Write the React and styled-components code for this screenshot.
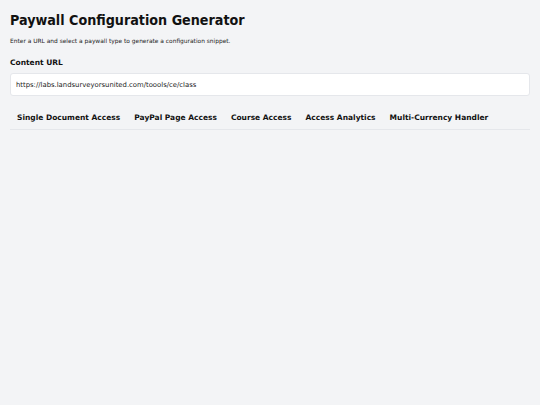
import React, { useState } from 'react';
import styled, { createGlobalStyle } from 'styled-components';

const GlobalStyle = createGlobalStyle`
  html, body {
    margin: 0;
    padding: 0;
    background: #f3f4f6;
    font-family: "DejaVu Sans", Verdana, sans-serif;
    color: #111827;
  }
`;

const Page = styled.div`
  min-height: 405px;
  box-sizing: border-box;
  padding: 10px 10px;
  background: #f3f4f6;
`;

const Title = styled.h1`
  margin: 0;
  font-family: "DejaVu Sans Condensed", "DejaVu Sans", sans-serif;
  font-size: 14.2px;
  line-height: 21px;
  font-weight: bold;
  color: #111;
`;

const Subtitle = styled.p`
  margin: 6px 0 0;
  font-size: 5.9px;
  line-height: 8px;
  color: #222;
`;

const Label = styled.label`
  display: block;
  margin-top: 13px;
  font-size: 7.5px;
  line-height: 10px;
  font-weight: bold;
  color: #111;
`;

const UrlInput = styled.input`
  display: block;
  width: 100%;
  box-sizing: border-box;
  margin-top: 5px;
  height: 23px;
  padding: 0 5px;
  border: 1px solid #e5e7eb;
  border-radius: 3px;
  background: #fff;
  font-family: "DejaVu Sans", Verdana, sans-serif;
  font-size: 6.85px;
  color: #222;
  outline: none;
`;

const TabList = styled.div`
  display: flex;
  margin-top: 12px;
  border-bottom: 1px solid #e5e7eb;
`;

const Tab = styled.button`
  border: none;
  background: transparent;
  padding: 5px 7px 7px;
  font-family: "DejaVu Sans", Verdana, sans-serif;
  font-size: 7.5px;
  font-weight: bold;
  color: ${(p) => (p.$active ? '#000' : '#111')};
  cursor: pointer;
`;

const tabs = [
  'Single Document Access',
  'PayPal Page Access',
  'Course Access',
  'Access Analytics',
  'Multi-Currency Handler',
];

export default function App() {
  const [url, setUrl] = useState('https://labs.landsurveyorsunited.com/toools/ce/class');
  const [active, setActive] = useState(null);

  return (
    <Page>
      <GlobalStyle />
      <Title>Paywall Configuration Generator</Title>
      <Subtitle>Enter a URL and select a paywall type to generate a configuration snippet.</Subtitle>
      <Label htmlFor="content-url">Content URL</Label>
      <UrlInput id="content-url" value={url} onChange={(e) => setUrl(e.target.value)} />
      <TabList>
        {tabs.map((t) => (
          <Tab key={t} $active={active === t} onClick={() => setActive(t)}>
            {t}
          </Tab>
        ))}
      </TabList>
    </Page>
  );
}
